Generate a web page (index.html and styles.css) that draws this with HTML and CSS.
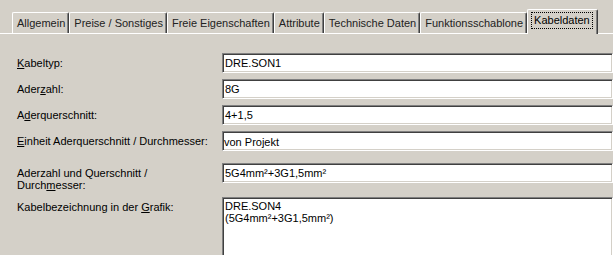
FILE: index.html
```html
<!DOCTYPE html>
<html lang="de">
<head>
  <meta charset="UTF-8" />
  <title>Kabeldaten</title>
  <link rel="stylesheet" href="styles.css">
</head>
<body>

  <div class="tabs">
    <div class="tab">Allgemein</div>
    <div class="tab">Preise / Sonstiges</div>
    <div class="tab">Freie Eigenschaften</div>
    <div class="tab">Attribute</div>
    <div class="tab">Technische Daten</div>
    <div class="tab">Funktionsschablone</div>
    <div class="tab active"><span class="focus">Kabeldaten</span></div>
  </div>

  <div class="panel">
    <div class="row">
      <label><u>K</u>abeltyp:</label>
      <div class="field">DRE.SON1</div>
    </div>
    <div class="row">
      <label>Ader<u>z</u>ahl:</label>
      <div class="field">8G</div>
    </div>
    <div class="row">
      <label>A<u>d</u>erquerschnitt:</label>
      <div class="field">4+1,5</div>
    </div>
    <div class="row">
      <label><u>E</u>inheit Aderquerschnitt / Durchmesser:</label>
      <div class="field combo">von Projekt</div>
    </div>
    <div class="row gap-top">
      <label>Aderzahl und Querschnitt /<br>Durch<u>m</u>esser:</label>
      <div class="field">5G4mm²+3G1,5mm²</div>
    </div>
    <div class="row">
      <label>Kabelbezeichnung in der <u>G</u>rafik:</label>
      <div class="field area">DRE.SON4<br>(5G4mm²+3G1,5mm²)</div>
    </div>
  </div>

</body>
</html>
```

FILE: styles.css
```css
body {
  margin: 0;
  background-color: #d4d0c8;
  font-family: 'Liberation Sans', Arial, sans-serif;
  font-size: 11px;
  color: #000;
  overflow: hidden;
}

.tabs {
  display: flex;
  align-items: flex-end;
  height: 33px;
  padding-left: 12px;
  border-bottom: 1px solid #fff;
}

.tab {
  height: 20px;
  line-height: 20px;
  padding: 0 3px 0 4px;
  border-top: 1px solid #fff;
  border-left: 1px solid #fff;
  border-right: 1px solid #404040;
  box-shadow: inset -1px 0 #808080;
  border-radius: 2px 2px 0 0;
  color: #222;
  white-space: nowrap;
}

.tab.active {
  height: 24px;
  margin-bottom: -1px;
  padding: 0 4px 0 3px;
  background-color: #d4d0c8;
  color: #000;
}

.tab.active .focus {
  display: inline-block;
  line-height: 15px;
  padding: 0 2px;
  border: 1px dotted #000;
}

.panel {
  display: flex;
  flex-direction: column;
  gap: 6px;
  padding: 19px 0 0 17px;
}

.row {
  display: flex;
  align-items: flex-start;
}

.row.gap-top {
  margin-top: 6px;
}

.row label {
  width: 205px;
  flex-shrink: 0;
  padding-top: 4px;
  line-height: 12px;
}

.field {
  width: 420px;
  height: 18px;
  line-height: 18px;
  padding: 0 2px;
  background-color: #fff;
  border-top: 1px solid #808080;
  border-left: 1px solid #808080;
  border-bottom: 1px solid #fff;
  border-right: 1px solid #fff;
  box-shadow: inset 1px 1px #404040, inset -1px -1px #d4d0c8;
  white-space: nowrap;
}

.field.combo {
  line-height: 21px;
  padding-left: 1px;
}

.field.area {
  height: 80px;
  line-height: 12px;
  padding-top: 2px;
}
```
